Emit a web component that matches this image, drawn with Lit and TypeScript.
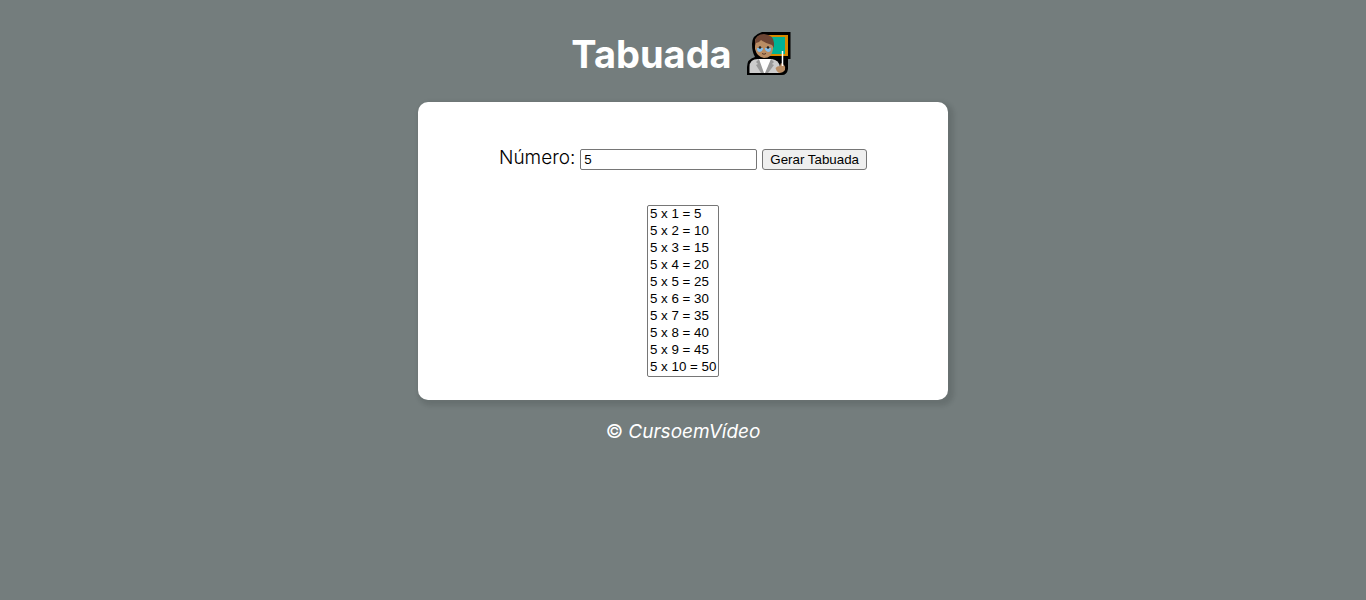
import { LitElement, html, css } from "lit";
import { customElement, state } from "lit/decorators.js";

@customElement("teacher-icon")
class TeacherIcon extends LitElement {
  static styles = css`
    :host {
      display: block;
      width: 44px;
      height: 44px;
      padding: 0 4px;
    }
    .icon {
      display: block;
      width: 100%;
      height: 100%;
    }
  `;

  render() {
    return html`
      <svg class="icon" viewBox="0 0 44 44" aria-hidden="true">
        <path
          fill="#000"
          d="M15 0H43.500V27H41V37Q40 43 35 43H0V35Q0 27 8 25Q5 20 5 12Q5 3 15 0Z"
        />
        <rect x="18" y="3" width="23" height="21" fill="#d68a00" />
        <rect x="20" y="5" width="18" height="17" fill="#00b294" />
        <path fill="#000" d="M25 24H35V28H30Z" />
        <path fill="#ccc" d="M2.500 41V35Q2.500 27 11 27H25Q32 28 33 35V41Z" />
        <path fill="#fff" d="M12 27H24L22 36L20 41H15L13 36Z" />
        <path fill="#999" d="M12 27L17 41H14L9 33L11 32L9 30Z M24 27L18 41H21L27 33L25 32L27 30Z" />
        <path fill="#b98d64" d="M8 10Q8 3 17 3Q26 3 26 12V17Q25 26 17 26Q10 25 8 17Z" />
        <path fill="#6d4534" d="M8 14V10Q9 2 17 2Q27 3 27 11V16L25 13Q18 11 14 8Q12 11 9 11Z" />
        <path fill="#83beec" d="M10 16H16V17Q15 20 13 20Q10 20 10 17Z M18 16H24V17Q24 20 21 20Q18 19 18 17Z" />
        <circle cx="13" cy="15.500" r="1.300" fill="#222" />
        <circle cx="21" cy="15.500" r="1.300" fill="#222" />
        <path stroke="#5a3a2b" fill="none" d="M15 21.500Q17 23 19 21.500" />
        <path
          fill="#b98d64"
          d="M34 31L37 33Q39 35 38 38Q36 41 32 41Q29 39 28.500 36Q30 34 33 34Z"
        />
        <path stroke="#fff" stroke-width="1.500" d="M35.500 19V34" />
      </svg>
    `;
  }
}

@customElement("app-root")
class AppRoot extends LitElement {
  static styles = css`
    :host {
      display: block;
      min-height: 100vh;
      background: #747d7d;
      color: #000;
      font: 300 19px/24px Inter, sans-serif;
    }
    .header {
      display: flex;
      justify-content: center;
      align-items: center;
      gap: 11px;
      padding: 30px 0 24px;
      color: #fff;
    }
    .title {
      margin: 0;
      font-size: 38px;
      line-height: 48px;
      font-weight: 700;
    }
    .card {
      box-sizing: border-box;
      width: 100%;
      max-width: 530px;
      margin: 0 auto;
      padding: 44px 15px 23px;
      border-radius: 10px;
      background: #fff;
      box-shadow: 3px 3px 4px 3px rgba(20, 30, 30, 0.13);
    }
    .row {
      display: flex;
      flex-wrap: wrap;
      justify-content: center;
      align-items: baseline;
      gap: 5px;
    }
    .field,
    .button,
    .list {
      font-family: "Liberation Sans", Arial, sans-serif;
    }
    .field {
      box-sizing: border-box;
      width: 177px;
      height: 21px;
      border: 1px solid #767676;
      border-radius: 2px;
      padding: 1px 3px;
    }
    .button {
      height: 21px;
      border: 1px solid #767676;
      border-radius: 3px;
      padding: 1px 7px;
      background: #efefef;
      color: #000;
    }
    .list {
      display: block;
      margin: 35px auto 0;
      border: 1px solid #767676;
      border-radius: 2px;
      width: 72px;
      height: 172px;
      overflow: hidden;
      color: #000;
      background: #fff;
    }
    .footer {
      padding-top: 20px;
      text-align: center;
      color: #fff;
      font-weight: 400;
    }
    .author {
      font-style: italic;
    }
  `;

  @state() private base = 5;

  private generate() {
    const field = this.renderRoot.querySelector<HTMLInputElement>("#number");
    if (field && field.value !== "") this.base = Number(field.value);
  }

  render() {
    const factors = Array.from({ length: 10 }, (_, i) => i + 1);
    return html`
      <header class="header">
        <h1 class="title">Tabuada</h1>
        <teacher-icon></teacher-icon>
      </header>
      <main class="card">
        <div class="row">
          <label for="number">Número:</label>
          <input class="field" id="number" type="number" value="5" />
          <button class="button" type="button" @click=${this.generate}>Gerar Tabuada</button>
        </div>
        <select class="list" size="10" aria-label="Tabuada">
          ${factors.map((n) => html`<option>${this.base} x ${n} = ${this.base * n}</option>`)}
        </select>
      </main>
      <footer class="footer">© <span class="author">CursoemVídeo</span></footer>
    `;
  }
}
